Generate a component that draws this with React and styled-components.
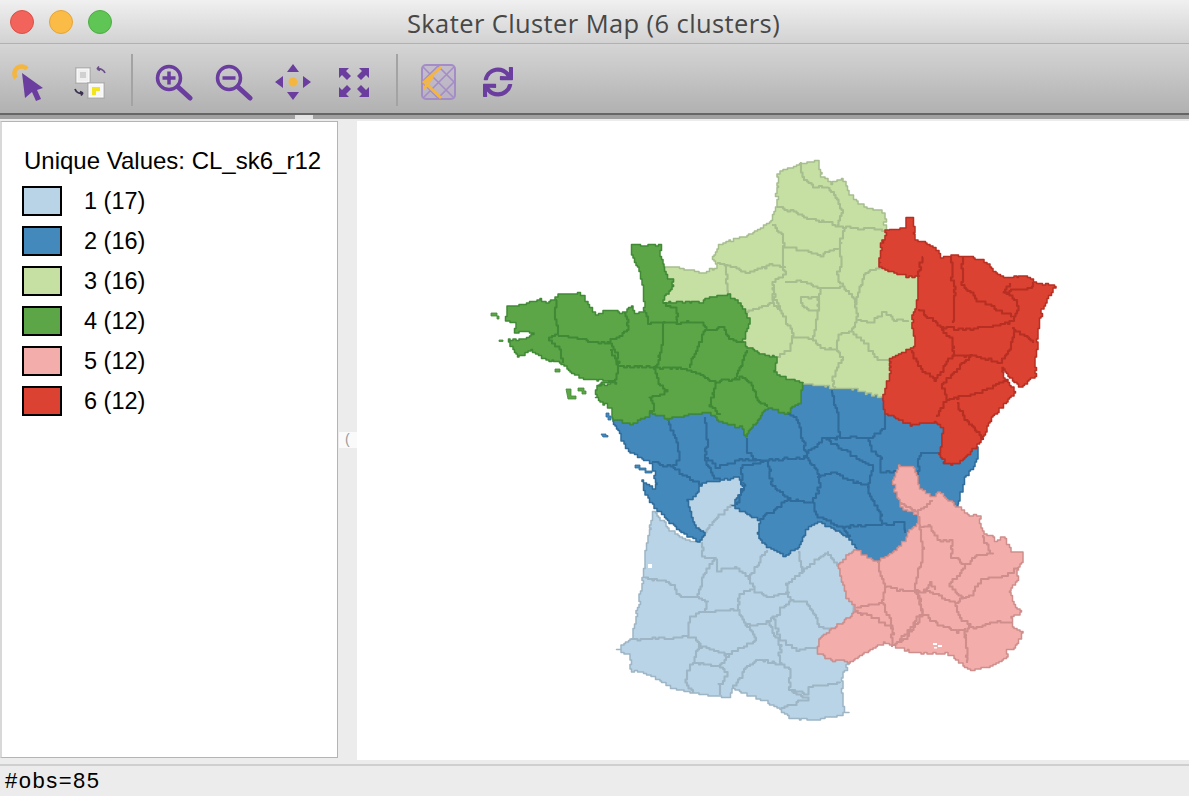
import React from 'react';
import styled, { createGlobalStyle } from 'styled-components';
import { FaSync } from 'react-icons/fa';

const GlobalStyle = createGlobalStyle`
  html, body { margin: 0; padding: 0; overflow: hidden; }
  body { font-family: "Liberation Sans", Arial, sans-serif; background: #ececec; }
`;

const Window = styled.div`
  width: 1189px;
  height: 796px;
  display: flex;
  flex-direction: column;
  position: relative;
  background: #ececec;
`;

const TitleBar = styled.div`
  height: 43px;
  flex: none;
  position: relative;
  display: flex;
  align-items: center;
  justify-content: center;
  background: linear-gradient(#f0f0f0, #d2d2d2);
  border-bottom: 1px solid #b1b1b1;
`;

const Lights = styled.div`
  position: absolute;
  left: 10px;
  top: 10px;
  display: flex;
  gap: 15px;
`;

const Light = styled.span`
  width: 24px;
  height: 24px;
  box-sizing: border-box;
  border-radius: 50%;
  background: ${(p) => p.$color};
  border: 1px solid ${(p) => p.$edge};
`;

const Title = styled.div`
  font-family: "Open Sans", "Liberation Sans", sans-serif;
  font-size: 25.5px;
  letter-spacing: 0.4px;
  color: #474747;
  margin-left: -2px;
  margin-top: 2px;
`;

const Toolbar = styled.div`
  height: 62px;
  padding-top: 7px;
  flex: none;
  display: flex;
  align-items: center;
  padding-left: 2px;
  background: linear-gradient(#d5d5d5, #b1b1b1);
`;

const ToolButton = styled.div`
  width: 60px;
  height: 44px;
  display: flex;
  align-items: center;
  justify-content: center;
  color: #6a3d9f;
  filter: blur(0.45px);
`;

const Separator = styled.div`
  width: 2px;
  height: 52px;
  background: #a3a3a3;
  margin: -4px ${(p) => p.$after}px 0 ${(p) => p.$before}px;
`;

const ToolbarEdge = styled.div`
  height: 4px;
  flex: none;
  position: relative;
  border-top: 2px solid #666;
  background: #a0a0a0;
`;

const EdgeTab = styled.span`
  position: absolute;
  left: 295px;
  top: 0;
  width: 18px;
  height: 4px;
  background: #e4e4e4;
`;

const Content = styled.div`
  flex: 1;
  display: flex;
  min-height: 0;
  padding-top: 2px;
  position: relative;
`;

const LegendPanel = styled.div`
  width: 338px;
  height: 637px;
  flex: none;
  box-sizing: border-box;
  background: #fff;
  border: 1px solid #b4b4b4;
  border-left: 2px solid #d8d8d8;
  padding: 25px 0 0 22px;
`;

const LegendTitle = styled.div`
  font-size: 24px;
  line-height: 28px;
  color: #000;
  margin: 0 0 12px 0;
  white-space: nowrap;
`;

const LegendRow = styled.div`
  display: flex;
  align-items: center;
  height: 28px;
  margin-bottom: 12px;
`;

const Swatch = styled.span`
  width: 40px;
  height: 30px;
  box-sizing: border-box;
  margin-left: -2px;
  flex: none;
  border: 2px solid #000;
  background: ${(p) => p.$fill};
`;

const LegendLabel = styled.span`
  font-size: 23.5px;
  margin-left: 22px;
  color: #000;
`;

const Splitter = styled.div`
  position: absolute;
  left: 339px;
  top: 313px;
  width: 18px;
  height: 16px;
  background: #fafafa;
  color: #999;
  font-size: 14px;
  line-height: 15px;
  padding-left: 6px;
  box-sizing: border-box;
`;

const MapArea = styled.div`
  margin-left: 19px;
  width: 832px;
  height: 639px;
  background: #fff;
  overflow: hidden;
`;

const MapSvg = styled.svg`
  display: block;
  filter: blur(0.3px);
`;

const StatusBar = styled.div`
  height: 30px;
  flex: none;
  border-top: 2px solid #cfcfcf;
  background: #ececec;
  font-size: 22px;
  line-height: 30px;
  letter-spacing: 1.5px;
  padding-left: 5px;
  color: #000;
`;

const parse = (s) => s.trim().split(/\s+/).map((p) => p.split(',').map(Number));

// breaks a hand traced line up into small pixel sized stairs, like the low res map export
const jag = (s, seed = 1) => {
  const pts = parse(s);
  const out = [];
  const grid = 1.5;
  let n = seed * 7;
  const rnd = () => {
    n = (n * 9301 + 49297) % 233280;
    return n / 233280 - 0.5;
  };
  pts.forEach((p, i) => {
    if (i === 0 || i === pts.length - 1) out.push(p);
    if (i === pts.length - 1) return;
    const q = pts[i + 1];
    const steps = Math.max(1, Math.round(Math.hypot(q[0] - p[0], q[1] - p[1]) / 3));
    for (let k = i === 0 ? 1 : 0; k < steps; k++) {
      const t = k / steps;
      const x = p[0] + (q[0] - p[0]) * t + rnd() * 2;
      const y = p[1] + (q[1] - p[1]) * t + rnd() * 2;
      out.push([Math.round(x / grid) * grid, Math.round(y / grid) * grid]);
    }
  });
  const res = [out[0]];
  out.slice(1).forEach((p) => {
    const last = res[res.length - 1];
    res.push([p[0], last[1]], p);
  });
  return res;
};

const rev = (a) => [...a].reverse();
const toPath = (pts, close) =>
  'M' + pts.map((p) => p.join(' ')).join('L') + (close ? 'Z' : '');

const greenCoast = jag('613,418 612,408 595,397 598,385 617,382 590,380 573,373 562,363 543,358 533,350 520,358 512,347 507,340 525,340 533,332 513,332 517,323 505,320 507,307 523,303 540,300 547,303 558,295 580,293 587,303 595,315 605,310 620,312 632,307 635,313 645,312 643,283 640,273 633,257 630,244 645,246 660,245 660,257 664,267', 3);
const greenPale = jag('664,267 665,275 673,282 674,287 665,298 663,303 680,302 700,302 713,297 728,295 738,303 745,313 750,323 743,342 747,348 760,353 777,358 775,372 780,377 803,383', 5);
const greenBlue = jag('803,383 803,390 800,403 787,413 770,408 763,413 757,422 747,437 742,427 723,423 710,412 690,415 670,419 653,413 633,425 613,418', 7);
const paleNorth = jag('664,267 677,268 700,273 717,267 713,257 720,245 740,237 763,228 773,218 777,200 778,173 800,163 818,160 822,177 830,183 842,178 850,195 863,207 885,212 885,228 887,230', 9);
const paleRed = jag('887,230 880,253 880,267 897,275 918,277 918,303 912,320 915,347 890,360 890,377 883,397', 11);
const paleBlue = jag('883,397 857,390 830,387 803,383', 13);
const redOuter = jag('887,230 905,228 907,218 913,217 915,240 933,247 940,257 953,255 970,257 983,260 997,275 1010,278 1023,275 1033,282 1056,287 1042,310 1037,343 1035,370 1036,376 1023,388 1010,377 1002,367 1004,377 1015,393 1003,407 990,423 983,440 977,447', 15);
const redBlue = jag('977,447 973,452 957,465 945,462 940,452 943,427 937,422 912,425 885,412 883,397', 17);
const blueEast = jag('977,447 978,457 973,470 965,480 958,507', 19);
const bluePink = jag('958,507 940,492 933,497 920,487 915,467 900,465 893,483 900,507 918,517 918,523 897,550 877,562 857,550', 21);
const bluePale = jag('857,550 850,537 820,522 807,530 798,550 785,555 767,545 758,535 760,520 732,505 745,485 740,478 703,483 697,497 687,500 693,523 705,535 700,542', 23);
const blueCoast = jag('700,542 685,533 670,521 655,507 648,497 642,480 653,488 657,482 652,463 633,453 623,440 613,418', 25);
const palePink = jag('857,550 853,552 838,567 847,597 857,613 842,623 822,637 818,653 830,660 850,662', 27);
const paleRest = jag('850,662 842,677 843,710 848,713 817,720 793,718 780,708 767,702 733,688 730,697 693,693 673,688 657,677 632,670 630,655 617,650 632,637 643,580 645,557 653,512 670,530 685,540 700,542', 29);
const pinkOuter = jag('958,507 970,515 980,517 982,532 995,540 1003,537 1012,552 1022,553 1023,562 1017,572 1018,580 1010,593 1015,607 1022,613 1012,618 1013,627 1022,633 1020,643 1008,653 1007,660 990,667 973,670 960,662 948,653 927,653 912,652 893,645 885,642 857,658 850,662', 31);

const regions = [
  {
    key: 'pale-blue', fill: '#b8d4e6', line: '#9db5c4',
    outline: [...rev(bluePale), ...rev(palePink), ...paleRest],
    inner: [
      '732,505 713,523 705,535', '703,543 702,557 715,558 703,580 697,597 683,598 670,582 645,578',
      '715,558 718,570 737,568 748,578 767,550', '748,578 753,590 767,597 788,593 787,583 800,573 820,557 827,553 838,567',
      '798,552 802,572', '697,597 708,603 705,612 690,617 688,637 632,640',
      '705,612 737,610 740,593 753,590', '737,610 745,625 757,640 730,655 703,647 697,637 688,637',
      '745,625 760,625 773,618 790,600 788,593', '773,618 780,640 797,650 817,648',
      '790,600 807,603 820,627 838,630', '767,622 780,647 780,663 760,660 747,667 738,682 733,688',
      '780,663 790,670 790,690 807,695 810,687 840,683', '790,690 807,700 781,708',
      '700,643 693,663 685,682 693,693', '730,655 720,667 728,677 720,685 720,695', '693,663 720,667',
    ],
  },
  {
    key: 'blue', fill: '#4389bc', line: '#2f6c9b',
    outline: [...rev(greenBlue), ...rev(paleBlue), ...rev(redBlue), ...blueEast, ...bluePink, ...bluePale, ...blueCoast],
    inner: [
      '668,422 677,443 680,460 673,467', '705,417 707,443 705,458 713,477 720,480',
      '652,462 673,468 690,480 702,485', '705,458 717,467 740,460 757,460 747,450 747,438',
      '757,460 803,458 807,455 803,437 797,417 787,413', '803,458 823,438 840,438 838,413 832,390',
      '840,438 867,438 885,428 885,413', '867,438 872,452 882,460 880,472 898,472',
      '807,458 818,473 820,487 813,503', '823,438 873,468', '768,460 772,487 790,500 813,503',
      '740,468 743,490 737,505', '767,461 740,468', '790,500 760,520',
      '817,477 833,472 843,478 867,487 873,468', '813,503 817,517 843,528 850,537',
      '843,527 903,523 905,533', '867,487 870,497 882,517 882,524', '920,453 917,480', '920,453 940,452',
    ],
  },
  {
    key: 'pale-green', fill: '#c6e0a4', line: '#a6bd8d',
    outline: [...paleNorth, ...paleRed, ...paleBlue, ...rev(greenPale)],
    inner: [
      '800,163 803,177 813,187 828,188', '828,188 837,200 842,213 838,227',
      '777,207 793,212 810,220 827,222 838,227 853,228 885,230',
      '845,228 840,247 842,267 837,273 842,287 855,302 857,317 853,332 838,335 837,350 842,360 833,378 833,387',
      '772,225 783,237 783,260 785,275 773,283 775,300 787,323 793,333 790,350 777,357',
      '783,247 800,250 820,255 838,248', '785,282 803,282 820,288 842,287',
      '820,288 817,323 812,338 793,338', '812,338 820,348 837,350',
      '803,297 800,303 807,310 818,310 818,297 803,297', '855,302 865,273 880,267',
      '857,320 870,323 883,312 895,320 908,322', '853,332 867,347 877,360 890,360',
      '717,263 725,265 728,293', '725,265 747,273 770,265 785,268', '745,312 773,303 778,310', '773,288 773,303',
    ],
  },
  {
    key: 'green', fill: '#5da648', line: '#408a36',
    outline: [...greenCoast, ...greenPale, ...greenBlue],
    inner: [
      '557,300 555,313 558,335 550,340 560,353 563,363', '558,336 577,338 593,343 608,342 627,330 628,320 625,312',
      '608,342 617,353 618,367 617,380 598,385', '610,350 618,367 655,367 687,370 713,382 743,377 753,387 757,400 767,407',
      '645,313 648,323 663,322 663,347 657,367', '663,322 677,323 700,322 707,330 698,347 690,368',
      '707,330 723,327 727,337 743,343', '747,350 743,363 737,377',
      '655,367 660,387 667,393 650,398 655,410 650,413', '717,383 710,407 720,415', '663,303 677,310 677,323',
    ],
  },
  {
    key: 'pink', fill: '#f3aeab', line: '#cf8e8c',
    outline: [...pinkOuter, ...rev(palePink), ...rev(bluePink)],
    inner: [
      '877,562 885,587 883,603 857,607', '885,587 900,590 917,593 923,613 907,640 893,645',
      '883,603 893,630 892,647', '857,613 873,617 893,630', '920,527 928,525 938,540 952,542 952,558 965,565 977,555 992,553 983,535',
      '920,527 923,550 922,560 915,590 922,607 923,615 917,618 913,628 898,643', '915,590 937,595 955,603',
      '955,603 963,598 950,585 962,568 965,565', '955,603 960,618 970,627 965,633 967,663',
      '923,615 935,623 957,632 965,628', '970,627 980,627 990,622 1012,623',
      '963,598 973,593 980,580 993,577 1003,577 1018,567', '923,592 930,583 935,590',
      '900,503 917,513 932,500', '918,517 920,527',
    ],
  },
  {
    key: 'red', fill: '#dc4231', line: '#b72f22',
    outline: [...redOuter, ...redBlue, ...rev(paleRed)],
    inner: [
      '923,257 918,277', '952,257 952,280 955,293 953,323', '918,310 940,327 953,343 953,357 937,380 923,370 912,350',
      '940,327 970,330 1010,322 1018,310 1017,300 1003,292 1010,283', '962,257 962,285 977,300 997,310 1012,317',
      '1003,292 1030,288 1033,282', '1012,328 1033,343', '1015,332 1007,357 1003,363 973,355 953,357',
      '973,355 942,387 947,400 937,417', '947,400 977,393 1007,380', '957,403 963,417 983,440',
    ],
  },
];

const islands = [
  { fill: '#5da648', line: '#408a36', d: 'M491 313h6v3h-6zM497 316h2v3h-2zM499 340h4v1.5h-4zM555 369h5v3h-5zM566 389h5v7h5v3h-8zM578 388h6v3h2v3h-4v-3h-4z' },
  { fill: '#4389bc', line: '#2f6c9b', d: 'M606 413h3v3h2v4h-3v-3h-2zM601 434h5v1.5h2v1.5h-5zM635 465h5v3h6v3h6v2h-7v-3h-6v-2h-4z' },
];

const legend = [
  { fill: '#b8d4e6', label: '1 (17)' },
  { fill: '#4389bc', label: '2 (16)' },
  { fill: '#c6e0a4', label: '3 (16)' },
  { fill: '#5da648', label: '4 (12)' },
  { fill: '#f3aeab', label: '5 (12)' },
  { fill: '#dc4231', label: '6 (12)' },
];

const FranceMap = () => (
  <MapSvg width="832" height="640" viewBox="357 121 832 640">
    {regions.map((r) => (
      <g key={r.key}>
        <path d={toPath(r.outline, true)} fill={r.fill} stroke={r.line} strokeWidth="1.5" strokeLinejoin="round" />
        {r.inner.map((l, i) => (
          <path key={i} d={toPath(jag(l, i + 2))} fill="none" stroke={r.line} strokeWidth="2.1" strokeLinejoin="round" />
        ))}
      </g>
    ))}
    {islands.map((s, i) => (
      <path key={i} d={s.d} fill={s.fill} stroke={s.line} strokeWidth="0.8" />
    ))}
    <path d="M933 643h4v2h-4zM938 645h4v2h-4zM934 647h3v1.5h-3zM648 564h4v4h-4z" fill="#fff" />
  </MapSvg>
);

const SelectIcon = () => (
  <svg width="40" height="40" viewBox="0 0 40 40">
    <path d="M4 16a6.5 6.5 0 0 1 11-9" fill="none" stroke="#f4b63f" strokeWidth="4.5" />
    <path d="M10 11 31 26 25 28 29 37 24 39 20 30 13 36Z" fill="currentColor" />
  </svg>
);

const SwitchIcon = () => (
  <svg width="40" height="40" viewBox="0 0 40 40">
    <rect x="3" y="5" width="16" height="17" fill="#a9a9a9" fillOpacity="0.7" />
    <rect x="5" y="7" width="12" height="13" fill="#efefef" stroke="#fff" />
    <rect x="8" y="10" width="6" height="6" fill="#d0d0d0" />
    <rect x="15" y="20" width="18" height="17" fill="#a9a9a9" fillOpacity="0.7" />
    <rect x="17" y="22" width="14" height="13" fill="#f6f6f6" stroke="#fff" />
    <path d="M20 25h8v4h-4v4h-4z" fill="#f2e51d" />
    <path d="M33 11c-1-3-5-5-8-4M25 7l2-2.5M25 7l3 1.5" fill="none" stroke="#6a4f8a" strokeWidth="1.7" />
    <path d="M3 27c1 3 4 5 8 4M11 31l-2 2.5M11 31l-3-1.5" fill="none" stroke="#3c3050" strokeWidth="1.8" />
  </svg>
);

const ZoomIcon = ({ plus }) => (
  <svg width="40" height="40" viewBox="0 0 40 40">
    <circle cx="16" cy="16" r="11.5" fill="none" stroke="currentColor" strokeWidth="3.5" />
    <path d="M25 25 37 36" stroke="currentColor" strokeWidth="5" strokeLinecap="round" />
    <path d="M9.5 16h13" stroke="currentColor" strokeWidth="3.5" />
    {plus && <path d="M16 9.5v13" stroke="currentColor" strokeWidth="3.5" />}
  </svg>
);

const PanIcon = () => (
  <svg width="40" height="40" viewBox="0 0 40 40">
    <path d="M20 2 26 10H14ZM20 38 14 30H26ZM2 20 10 14V26ZM38 20 30 26V14Z" fill="currentColor" />
    <circle cx="20" cy="20" r="4.5" fill="#f4b63f" />
  </svg>
);

const FitIcon = () => (
  <svg width="40" height="40" viewBox="0 0 40 40">
    <path
      d="M6 6H16L13 9 18 14 14 18 9 13 6 16ZM36 6V16L33 13 28 18 24 14 29 9 26 6ZM6 35V25L9 28 14 23 18 27 13 32 16 35ZM36 35H26L29 32 24 27 28 23 33 28 36 25Z"
      fill="currentColor"
    />
  </svg>
);

const BasemapIcon = () => (
  <svg width="40" height="40" viewBox="0 0 40 40">
    <rect x="4" y="3" width="33" height="34" rx="4" fill="#b9a9cf" fillOpacity="0.4" stroke="#a48dc6" strokeWidth="2" />
    <path d="M5 5 36 36M5 36 36 5M20 4 36 20 20 36 4 20Z" fill="none" stroke="#a48dc6" strokeWidth="1.6" />
    <path d="M23 5 6 20 23 36M6 27 15 14" fill="none" stroke="#f4b63f" strokeWidth="2.8" />
  </svg>
);

const tools = [
  [<SelectIcon key="a" />, <SwitchIcon key="b" />],
  [<ZoomIcon key="c" plus />, <ZoomIcon key="d" />, <PanIcon key="e" />, <FitIcon key="f" />],
  [<BasemapIcon key="g" />, <FaSync key="h" size={30} />],
];

const seps = [
  { before: 9, after: 10 },
  { before: 13, after: 10 },
];

const App = () => (
  <Window>
    <GlobalStyle />
    <TitleBar>
      <Lights>
        <Light $color="#f1635b" $edge="#dc4f47" />
        <Light $color="#fbbc47" $edge="#e4a436" />
        <Light $color="#5fc554" $edge="#4cad43" />
      </Lights>
      <Title>Skater Cluster Map (6 clusters)</Title>
    </TitleBar>
    <Toolbar>
      {tools.map((group, i) => (
        <React.Fragment key={i}>
          {group.map((icon, k) => (
            <ToolButton key={k}>{icon}</ToolButton>
          ))}
          {seps[i] && <Separator $before={seps[i].before} $after={seps[i].after} />}
        </React.Fragment>
      ))}
    </Toolbar>
    <ToolbarEdge>
      <EdgeTab />
    </ToolbarEdge>
    <Content>
      <LegendPanel>
        <LegendTitle>Unique Values: CL_sk6_r12</LegendTitle>
        {legend.map((l) => (
          <LegendRow key={l.label}>
            <Swatch $fill={l.fill} />
            <LegendLabel>{l.label}</LegendLabel>
          </LegendRow>
        ))}
      </LegendPanel>
      <Splitter>(</Splitter>
      <MapArea>
        <FranceMap />
      </MapArea>
    </Content>
    <StatusBar>#obs=85</StatusBar>
  </Window>
);

export default App;
